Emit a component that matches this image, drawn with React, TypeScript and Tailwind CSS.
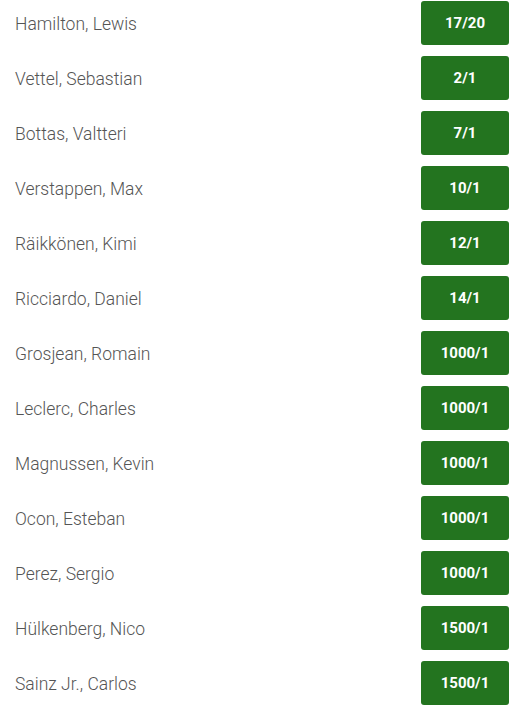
const runners = [
  { name: "Hamilton, Lewis", odds: "17/20" },
  { name: "Vettel, Sebastian", odds: "2/1" },
  { name: "Bottas, Valtteri", odds: "7/1" },
  { name: "Verstappen, Max", odds: "10/1" },
  { name: "Räikkönen, Kimi", odds: "12/1" },
  { name: "Ricciardo, Daniel", odds: "14/1" },
  { name: "Grosjean, Romain", odds: "1000/1" },
  { name: "Leclerc, Charles", odds: "1000/1" },
  { name: "Magnussen, Kevin", odds: "1000/1" },
  { name: "Ocon, Esteban", odds: "1000/1" },
  { name: "Perez, Sergio", odds: "1000/1" },
  { name: "Hülkenberg, Nico", odds: "1500/1" },
  { name: "Sainz Jr., Carlos", odds: "1500/1" },
];

export default function App() {
  return (
    <div className="w-[509px] bg-white pt-px font-['Roboto',sans-serif]">
      {runners.map((r, i) => (
        <div key={i} className="flex h-[44px] items-center justify-between mb-[11px]">
          <span className="pl-[15px] pt-[2px] text-[17.5px] font-light text-[#555]">{r.name}</span>
          <button className="h-[44px] w-[88px] rounded-[3px] bg-[#23741f] text-[15px] font-bold text-white">
            {r.odds}
          </button>
        </div>
      ))}
    </div>
  );
}
